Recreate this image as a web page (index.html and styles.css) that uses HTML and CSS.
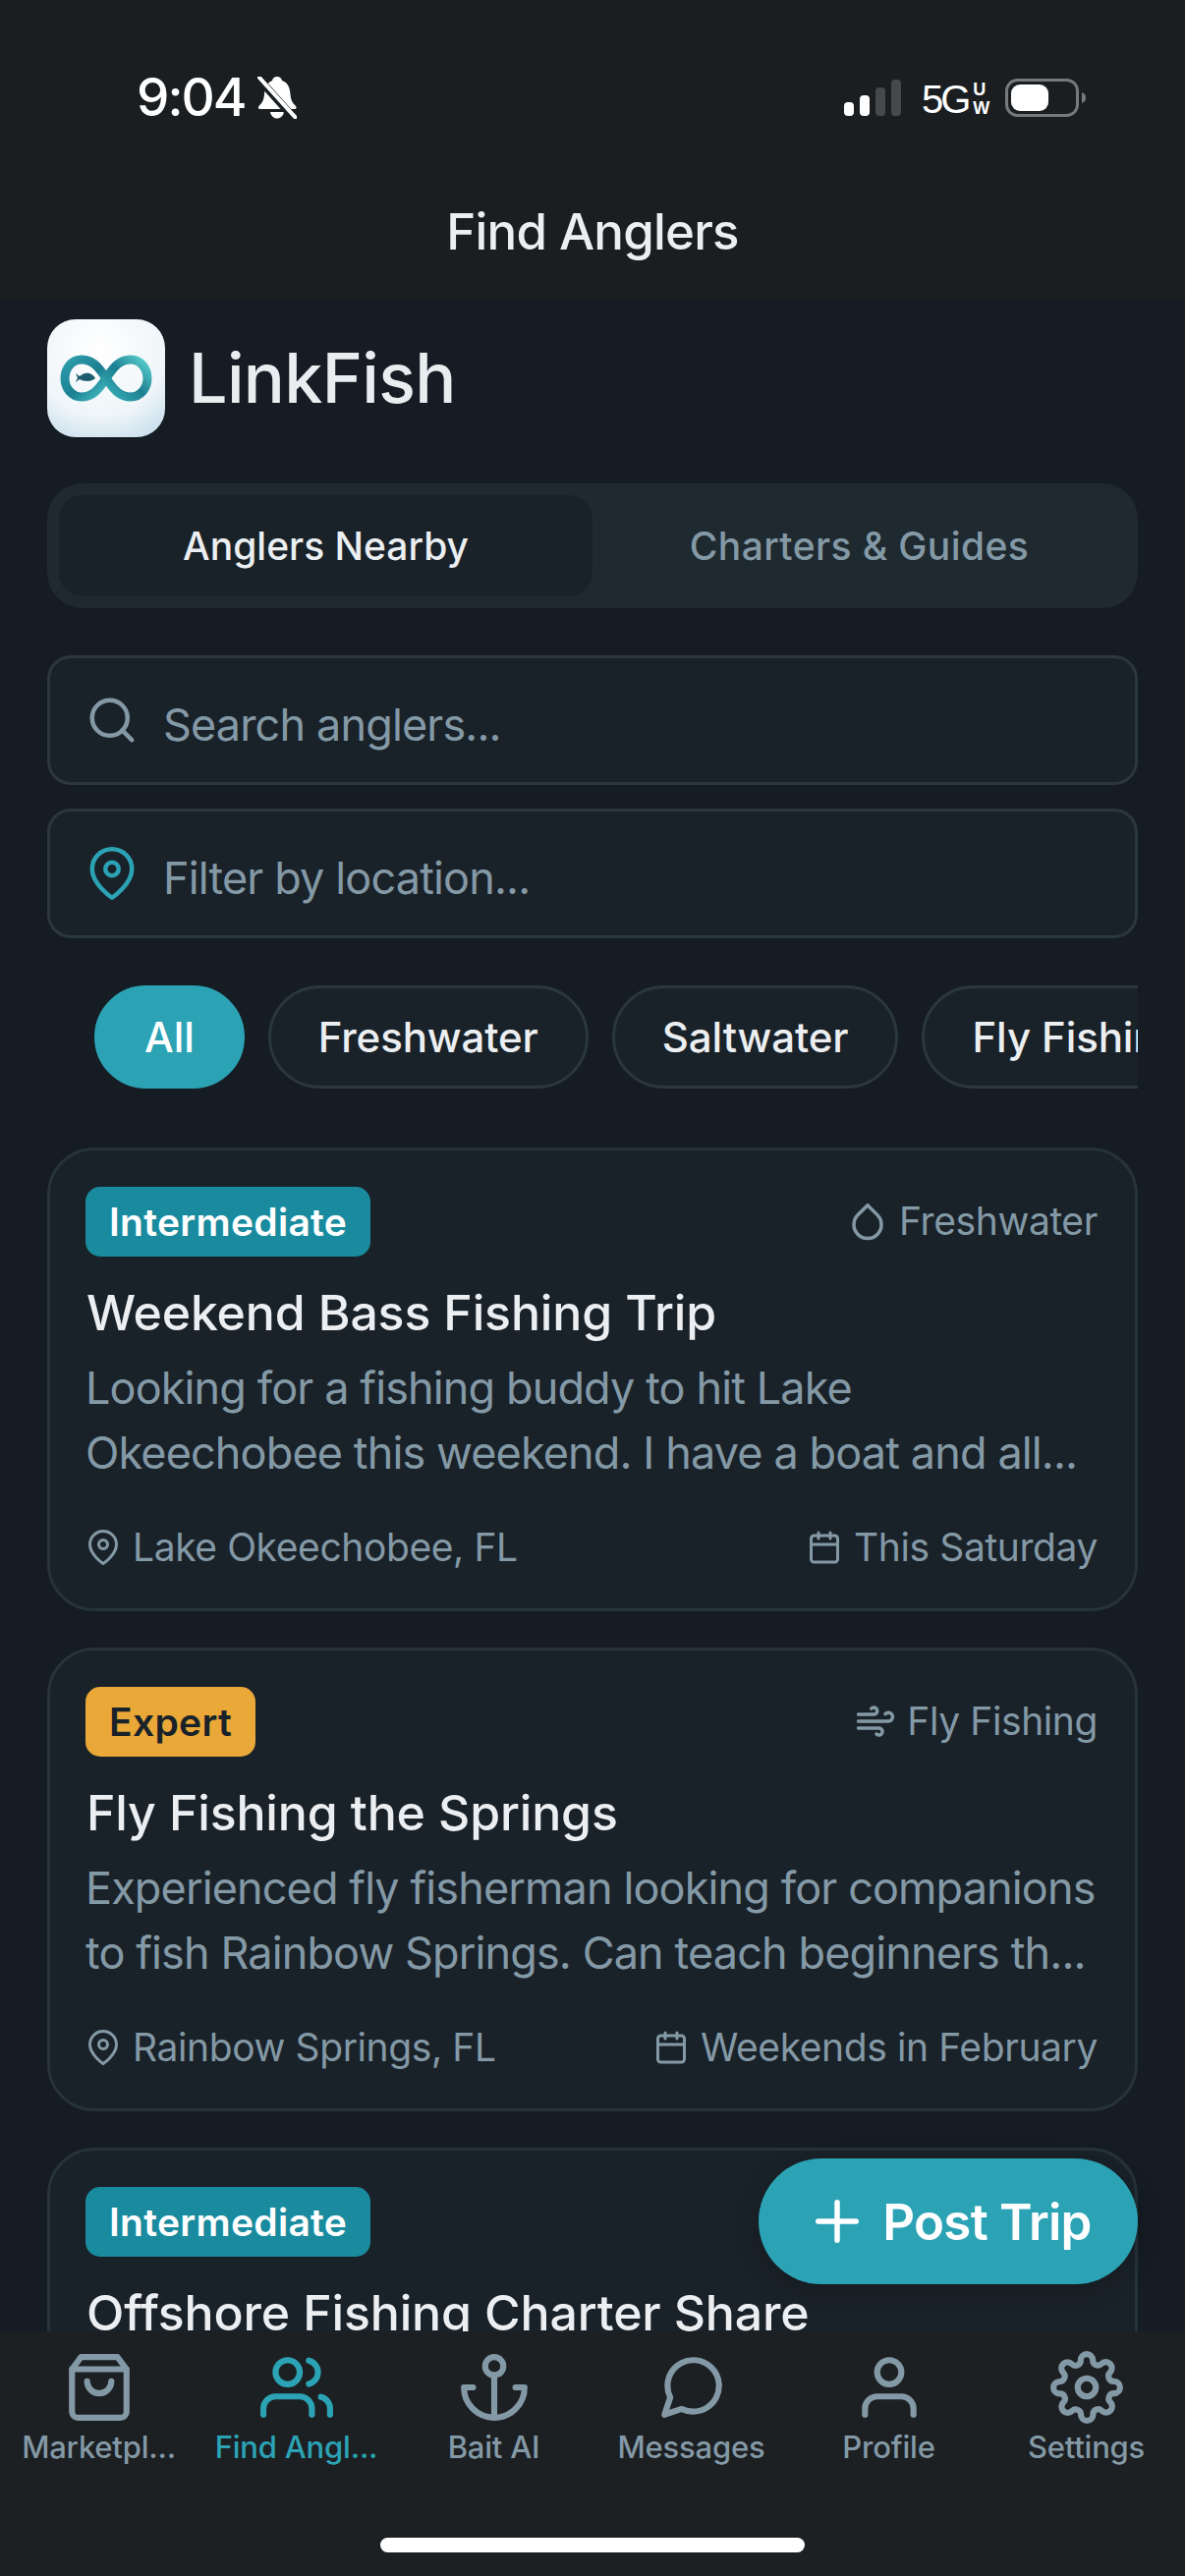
FILE: index.html
```html
<!DOCTYPE html>
<html lang="en">
<head>
<meta charset="utf-8">
<title>Find Anglers</title>
<link rel="stylesheet" href="styles.css">
</head>
<body>
<svg class="sprite" width="0" height="0" aria-hidden="true">
  <symbol id="i-pin" viewBox="0 0 24 24"><path d="M21 10c0 7-9 13-9 13s-9-6-9-13a9 9 0 0 1 18 0z"/><circle cx="12" cy="10" r="3"/></symbol>
  <symbol id="i-cal" viewBox="0 0 24 24"><rect x="3" y="4" width="18" height="18" rx="2"/><path d="M16 2v4"/><path d="M8 2v4"/><path d="M3 10h18"/></symbol>
  <symbol id="i-drop" viewBox="0 0 24 24"><path d="M12 2.690l5.660 5.660a8 8 0 1 1-11.310 0z"/></symbol>
  <symbol id="i-wind" viewBox="0 0 24 24"><path d="M9.590 4.590A2 2 0 1 1 11 8H2m10.590 11.410A2 2 0 1 0 14 16H2m15.730-8.270A2.500 2.500 0 1 1 19.500 12H2"/></symbol>
</svg>
<div class="phone">
  <header class="top">
    <div class="status">
      <div class="status-left">
        <span class="time">9:04</span>
        <svg class="bell" viewBox="0 0 40 43"><path class="bell-body" d="M20 0c2.500 0 4.500 1.500 5 4 6 2 8 7 8.500 14 .4 6 2.500 9 5.500 12 1.200 1.300.6 3-1.200 3H2.700C.900 33 .300 31.300 1.500 30c3-3 5.100-6 5.500-12C7.500 11 10 6 15 4c.5-2.500 2.500-4 5-4zM13 36h14c-.8 4-3.500 6.500-7 6.500S13.800 40 13 36z"/><path class="bell-cut" d="M1 2l36 40"/><path class="bell-line" d="M2 1l37 41"/></svg>
      </div>
      <div class="status-right">
        <svg class="signal" viewBox="0 0 58 37"><rect class="on" x="0" y="23" width="10" height="14" rx="4"/><rect class="on" x="16" y="16" width="10" height="21" rx="4"/><rect class="off" x="32" y="8" width="10" height="29" rx="4"/><rect class="off" x="48" y="0" width="10" height="37" rx="4"/></svg>
        <span class="net">5G<span class="net-uw"><span>U</span><span>W</span></span></span>
        <svg class="battery" viewBox="0 0 82 39"><rect class="batt-shell" x="1.500" y="1.500" width="72" height="36" rx="11"/><rect class="batt-fill" x="6" y="6" width="38" height="27" rx="9"/><path class="batt-nub" d="M78 14c3 1 4 3 4 5.500S81 24 78 25z"/></svg>
      </div>
    </div>
    <h1 class="page-title">Find Anglers</h1>
  </header>

  <main class="content">
    <div class="brand">
      <svg class="logo" viewBox="0 0 120 120">
        <defs>
          <radialGradient id="logoBg" cx="45%" cy="25%" r="95%"><stop offset="0" stop-color="#ffffff"/><stop offset=".6" stop-color="#eff5f9"/><stop offset="1" stop-color="#bcd8e8"/></radialGradient>
          <linearGradient id="loopA" x1="0" y1="0" x2="1" y2="1"><stop offset="0" stop-color="#2e9dab"/><stop offset=".55" stop-color="#1b7f90"/><stop offset="1" stop-color="#49c2c6"/></linearGradient>
          <linearGradient id="loopB" x1="0" y1="1" x2="1" y2="0"><stop offset="0" stop-color="#3ab1bb"/><stop offset=".5" stop-color="#1c7f90"/><stop offset="1" stop-color="#5bd0d0"/></linearGradient>
        </defs>
        <rect width="120" height="120" rx="29" fill="url(#logoBg)"/>
        <path d="M60 60C52 48 46 41 35 41 25 41 18 50 18 60s7 19 17 19c11 0 17-7 25-19z" fill="none" stroke="url(#loopA)" stroke-width="9"/>
        <path d="M60 60c8-12 14-19 25-19 10 0 17 9 17 19s-7 19-17 19c-11 0-17-7-25-19z" fill="none" stroke="url(#loopB)" stroke-width="9"/>
        <path d="M29 55l4 3c3-3 7-4 10-3 3 1 5 3 6 5-2 2-5 3-8 3-4 0-6-1-8-2l-4 3 2-4.500z" fill="#1f5d6e"/>
      </svg>
      <span class="brand-name">LinkFish</span>
    </div>

    <div class="tabs">
      <div class="tab tab-active">Anglers Nearby</div>
      <div class="tab">Charters &amp; Guides</div>
    </div>

    <div class="field field-search">
      <svg class="field-icon" viewBox="0 0 24 24"><circle cx="11" cy="11" r="8"/><path d="m21 21-4.350-4.350"/></svg>
      <span class="field-text">Search anglers...</span>
    </div>
    <div class="field field-location">
      <svg class="field-icon field-icon-teal" viewBox="0 0 24 24"><use href="#i-pin"/></svg>
      <span class="field-text">Filter by location...</span>
    </div>

    <div class="chips">
      <span class="chip chip-on">All</span>
      <span class="chip">Freshwater</span>
      <span class="chip">Saltwater</span>
      <span class="chip">Fly Fishing</span>
    </div>

    <section class="cards">
      <article class="card">
        <div class="card-top">
          <span class="badge badge-teal">Intermediate</span>
          <span class="kind"><svg class="kind-icon" viewBox="0 0 24 24"><use href="#i-drop"/></svg>Freshwater</span>
        </div>
        <h2 class="card-title">Weekend Bass Fishing Trip</h2>
        <p class="card-desc">Looking for a fishing buddy to hit Lake<br>Okeechobee this weekend. I have a boat and all...</p>
        <div class="card-meta">
          <span class="meta"><svg class="mini" viewBox="0 0 24 24"><use href="#i-pin"/></svg>Lake Okeechobee, FL</span>
          <span class="meta"><svg class="mini" viewBox="0 0 24 24"><use href="#i-cal"/></svg>This Saturday</span>
        </div>
      </article>
      <article class="card">
        <div class="card-top">
          <span class="badge badge-amber">Expert</span>
          <span class="kind"><svg class="kind-icon" viewBox="0 0 24 24"><use href="#i-wind"/></svg>Fly Fishing</span>
        </div>
        <h2 class="card-title">Fly Fishing the Springs</h2>
        <p class="card-desc">Experienced fly fisherman looking for companions<br>to fish Rainbow Springs. Can teach beginners th...</p>
        <div class="card-meta">
          <span class="meta"><svg class="mini" viewBox="0 0 24 24"><use href="#i-pin"/></svg>Rainbow Springs, FL</span>
          <span class="meta"><svg class="mini" viewBox="0 0 24 24"><use href="#i-cal"/></svg>Weekends in February</span>
        </div>
      </article>
      <article class="card">
        <div class="card-top">
          <span class="badge badge-teal">Intermediate</span>
        </div>
        <h2 class="card-title">Offshore Fishing Charter Share</h2>
      </article>
    </section>
  </main>

  <button class="fab" type="button">
    <svg class="fab-icon" viewBox="0 0 24 24"><path d="M5 12h14"/><path d="M12 5v14"/></svg>
    <span>Post Trip</span>
  </button>

  <nav class="nav">
    <div class="nav-items">
      <div class="nav-item">
        <svg class="nav-icon" viewBox="0 0 24 24"><path d="M6 2L3 6v14a2 2 0 0 0 2 2h14a2 2 0 0 0 2-2V6l-3-4z"/><path d="M3 6h18"/><path d="M16 10a4 4 0 0 1-8 0"/></svg>
        <span class="nav-label">Marketpl...</span>
      </div>
      <div class="nav-item nav-item-on">
        <svg class="nav-icon" viewBox="0 0 24 24"><path d="M17 21v-2a4 4 0 0 0-4-4H5a4 4 0 0 0-4 4v2"/><circle cx="9" cy="7" r="4"/><path d="M23 21v-2a4 4 0 0 0-3-3.870"/><path d="M16 3.130a4 4 0 0 1 0 7.750"/></svg>
        <span class="nav-label">Find Angl...</span>
      </div>
      <div class="nav-item">
        <svg class="nav-icon" viewBox="0 0 24 24"><circle cx="12" cy="5" r="3"/><path d="M12 22V8"/><path d="M5 12H2a10 10 0 0 0 20 0h-3"/></svg>
        <span class="nav-label">Bait AI</span>
      </div>
      <div class="nav-item">
        <svg class="nav-icon" viewBox="0 0 24 24"><path d="M21 11.500a8.380 8.380 0 0 1-.9 3.800 8.500 8.500 0 0 1-7.600 4.700 8.380 8.380 0 0 1-3.800-.9L3 21l1.900-5.700a8.380 8.380 0 0 1-.9-3.800 8.500 8.500 0 0 1 4.700-7.600 8.380 8.380 0 0 1 3.800-.9h.5a8.480 8.480 0 0 1 8 8v.5z"/></svg>
        <span class="nav-label">Messages</span>
      </div>
      <div class="nav-item">
        <svg class="nav-icon" viewBox="0 0 24 24"><path d="M20 21v-2a4 4 0 0 0-4-4H8a4 4 0 0 0-4 4v2"/><circle cx="12" cy="7" r="4"/></svg>
        <span class="nav-label">Profile</span>
      </div>
      <div class="nav-item">
        <svg class="nav-icon" viewBox="0 0 24 24"><circle cx="12" cy="12" r="3"/><path d="M19.400 15a1.650 1.650 0 0 0 .33 1.820l.06.06a2 2 0 0 1 0 2.830 2 2 0 0 1-2.830 0l-.06-.06a1.650 1.650 0 0 0-1.820-.33 1.650 1.650 0 0 0-1 1.510V21a2 2 0 0 1-2 2 2 2 0 0 1-2-2v-.09A1.650 1.650 0 0 0 9 19.400a1.650 1.650 0 0 0-1.820.33l-.06.06a2 2 0 0 1-2.830 0 2 2 0 0 1 0-2.830l.06-.06a1.650 1.650 0 0 0 .33-1.820 1.650 1.650 0 0 0-1.510-1H3a2 2 0 0 1-2-2 2 2 0 0 1 2-2h.09A1.650 1.650 0 0 0 4.600 9a1.650 1.650 0 0 0-.33-1.820l-.06-.06a2 2 0 0 1 0-2.830 2 2 0 0 1 2.830 0l.06.06a1.650 1.650 0 0 0 1.820.33H9a1.650 1.650 0 0 0 1-1.510V3a2 2 0 0 1 2-2 2 2 0 0 1 2 2v.09a1.650 1.650 0 0 0 1 1.510 1.650 1.650 0 0 0 1.820-.33l.06-.06a2 2 0 0 1 2.830 0 2 2 0 0 1 0 2.830l-.06.06a1.650 1.650 0 0 0-.33 1.820V9a1.650 1.650 0 0 0 1.510 1H21a2 2 0 0 1 2 2 2 2 0 0 1-2 2h-.09a1.650 1.650 0 0 0-1.510 1z"/></svg>
        <span class="nav-label">Settings</span>
      </div>
    </div>
    <div class="home-bar"></div>
  </nav>
</div>
</body>
</html>
```

FILE: styles.css
```css
* { box-sizing: border-box; }
html, body { margin: 0; padding: 0; background: #151c23; }
body { font-family: Inter, "Liberation Sans", sans-serif; }
.sprite { position: absolute; }

svg { display: block; flex: none; }
.mini, .kind-icon, .nav-icon, .field-icon, .fab-icon {
  fill: none;
  stroke: currentColor;
  stroke-width: 2;
  stroke-linecap: round;
  stroke-linejoin: round;
}

.phone {
  position: relative;
  width: 1206px;
  height: 2622px;
  display: flex;
  flex-direction: column;
  overflow: hidden;
}

/* top */
.top { height: 304px; flex: none; background: #1a1e21; padding-top: 70px; }
.status { display: flex; justify-content: space-between; height: 58px; padding: 0 101px 0 139px; align-items: center; }
.status-left { display: flex; align-items: center; gap: 13px; }
.status-right { display: flex; align-items: center; }
.time { color: #fff; font-size: 53px; font-weight: 500; line-height: 58px; letter-spacing: -2px; }
.bell { width: 40px; height: 43px; }
.bell-body { fill: #fff; }
.bell-cut { stroke: #1a1e21; stroke-width: 8; fill: none; }
.bell-line { stroke: #fff; stroke-width: 4; fill: none; stroke-linecap: round; }
.signal { width: 58px; height: 37px; }
.signal .on { fill: #fff; }
.signal .off { fill: #46494c; }
.net { display: flex; align-items: center; width: 65px; margin-left: 21px; padding-top: 3px; color: #fff; font-size: 40px; line-height: 40px; letter-spacing: -3px; font-family: "Liberation Sans", sans-serif; }
.net-uw { display: flex; flex-direction: column; margin-left: 5px; font-size: 18px; line-height: 19px; letter-spacing: 0; font-weight: 700; }
.battery { width: 82px; height: 39px; margin-left: 20px; }
.batt-shell { fill: none; stroke: #77797b; stroke-width: 3; }
.batt-fill { fill: #fff; }
.batt-nub { fill: #77797b; }
.page-title { margin: 77px 0 0; color: #eceff1; font-size: 51px; line-height: 62px; font-weight: 500; letter-spacing: -0.8px; text-align: center; }

/* content */
.content { flex: 1; min-height: 0; overflow: hidden; padding: 21px 48px 0; background: #151c23; }
.brand { display: flex; align-items: center; gap: 24px; height: 120px; }
.logo { width: 120px; height: 120px; }
.brand-name { color: #e9edf0; font-size: 70px; font-weight: 500; line-height: 84px; letter-spacing: -0.7px; }

.tabs { display: flex; gap: 0; margin-top: 47px; height: 127px; padding: 12px; background: #1f2a30; border-radius: 36px; }
.tab { flex: 1; display: flex; align-items: center; justify-content: center; border-radius: 24px; color: #8499a6; font-size: 39px; font-weight: 500; letter-spacing: 0.4px; }
.tab-active { background: #1a2229; color: #eceff1; letter-spacing: 0; }

.field { display: flex; align-items: center; gap: 30px; height: 132px; padding: 0 41px; background: #1a2229; border: 3px solid #2a373e; border-radius: 24px; }
.field-search { margin-top: 48px; }
.field-location { margin-top: 24px; }
.field-icon { width: 54px; height: 54px; margin-left: -5px; margin-right: -5px; color: #8499a6; }
.field-icon-teal { color: #2ba3b5; }
.field-text { color: #8499a6; font-size: 45px; line-height: 54px; letter-spacing: -0.85px; padding-top: 9px; }

.chips { display: flex; gap: 24px; margin-top: 48px; padding-left: 48px; overflow: hidden; }
.chip { flex: none; height: 105px; padding: 0 48px; display: flex; align-items: center; background: #1a2229; border: 3px solid #2a373e; border-radius: 53px; color: #eceff1; font-size: 42px; font-weight: 500; letter-spacing: -0.1px; }
.chip-on { background: #2ba3b5; border-color: #2ba3b5; color: #fff; }

.cards { display: flex; flex-direction: column; gap: 37px; margin-top: 60px; }
.card { flex: none; padding: 36px 38px 38px 36px; background: #1a2229; border: 3px solid #26333a; border-radius: 48px; }
.card-top { display: flex; justify-content: space-between; align-items: center; height: 72px; }
.badge { height: 71px; padding: 0 24px; display: flex; align-items: center; border-radius: 15px; font-size: 39px; font-weight: 600; letter-spacing: 0.3px; }
.badge-teal { background: #1a8b9e; color: #fff; }
.badge-amber { background: #e9a838; color: #1a2229; }
.kind, .meta { display: flex; align-items: center; color: #8499a6; font-size: 39px; line-height: 48px; letter-spacing: -0.4px; }
.kind { gap: 11px; }
.meta { gap: 12px; }
.mini { width: 36px; height: 36px; }
.kind-icon { width: 42px; height: 42px; }
.card-title { margin: 27px 0 0 1px; color: #eceff1; font-size: 50px; line-height: 60px; font-weight: 500; letter-spacing: -0.15px; }
.card-desc { margin: 14px 0 0; color: #8499a6; font-size: 45px; line-height: 66px; letter-spacing: -0.88px; white-space: nowrap; }
.card-meta { display: flex; justify-content: space-between; margin-top: 39px; }

/* fab */
.fab { position: absolute; left: 772px; top: 2197px; width: 386px; height: 128px; display: flex; align-items: center; justify-content: center; gap: 13px; padding: 0; border: 0; border-radius: 64px; background: #2ba3b5; color: #fff; font-family: inherit; font-size: 51px; font-weight: 600; letter-spacing: -0.75px; box-shadow: 0 6px 24px rgba(0,0,0,.25); }
.fab-icon { width: 66px; height: 66px; }

/* nav */
.nav { flex: none; height: 249px; background: #1c2023; }
.nav-items { display: grid; grid-template-columns: repeat(6, 1fr); padding-top: 20px; }
.nav-item { display: flex; flex-direction: column; align-items: center; color: #8499a6; }
.nav-item-on { color: #2ba3b5; }
.nav-icon { width: 74px; height: 74px; }
.nav-label { margin-top: 5px; font-size: 31px; line-height: 38px; font-weight: 500; letter-spacing: -0.2px; white-space: nowrap; }
.home-bar { width: 432px; height: 15px; margin: 73px auto 0; background: #fff; border-radius: 8px; }
```
